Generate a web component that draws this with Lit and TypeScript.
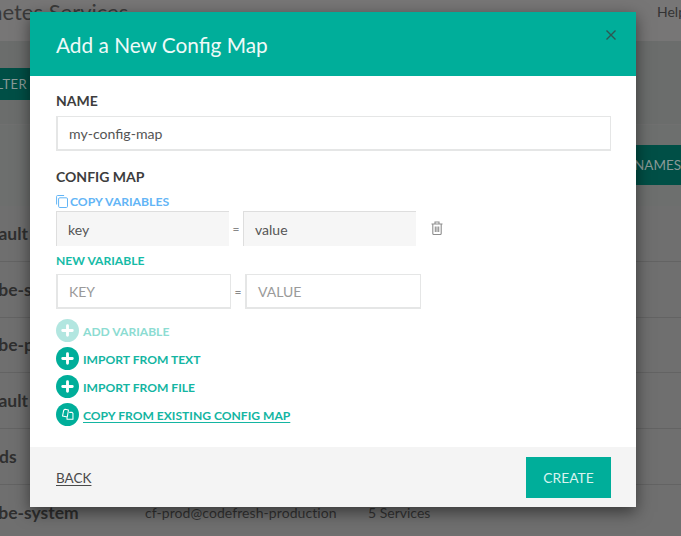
import { LitElement, html, css, svg } from "lit";
import { customElement } from "lit/decorators.js";

const plus = svg`<path d="M12 7v10M7 12h10" fill="none" stroke="currentColor" stroke-width="3" stroke-linecap="round"/>`;

@customElement("app-root")
export class AppRoot extends LitElement {
  static styles = css`
    :host { display: block; position: relative; width: 681px; height: 536px; overflow: hidden; font-family: Lato, "Open Sans", sans-serif; background: #6f6f6f; color: #2e2e2e; }
    * { box-sizing: border-box; }
    .page { height: 536px; display: flex; flex-direction: column; }
    .top { height: 41px; background: #777676; display: flex; justify-content: space-between; flex: none; }
    .page-title { font-size: 22px; line-height: 26px; margin: -1px 0 0 -68px; color: #3a3a3a; white-space: nowrap; }
    .help { font-size: 14px; line-height: 18px; margin: 3px -10px 0 0; color: #333; width: 34px; }
    .band { height: 84px; background: #6b6d6c; flex: none; border-bottom: 1px solid #707070; }
    .filter { width: 60px; height: 32px; margin: 27px 0 0 -30px; background: #004f46; color: #8a9a97; font-size: 13px; line-height: 32px; text-align: right; padding-right: 3px; letter-spacing: .4px; }
    .band2 { height: 81px; flex: none; display: flex; justify-content: flex-end; align-items: flex-start; background: #6d6f6e; }
    .ns { width: 47px; height: 40px; margin-top: 20px; background: #004f46; color: #8a9a97; font-size: 13.5px; line-height: 40px; white-space: nowrap; overflow: hidden; }
    .row { height: 55.8px; flex: none; border-bottom: 1px solid #636363; display: flex; align-items: center; font-size: 17.5px; font-weight: 700; color: #2f2f2f; }
    .row:last-child { border-bottom: 0; }
    .nm { width: 166px; margin-left: -21px; flex: none; white-space: nowrap; }
    .nm.far { width: 172px; margin-left: -27px; }
    .owner { width: 223px; flex: none; font-size: 14px; font-weight: 400; letter-spacing: .07px; color: #333; white-space: nowrap; }
    .svc { font-size: 14px; font-weight: 400; color: #333; white-space: nowrap; }

    .modal { position: absolute; left: 30px; top: 12px; width: 606px; height: 495px; background: #fff; display: flex; flex-direction: column; box-shadow: 0 5px 15px rgba(0,0,0,.5); }
    header { height: 64px; flex: none; background: #00ae9a; display: flex; justify-content: space-between; padding: 0 19px 0 26px; }
    h1 { margin: 0; font-size: 20.8px; font-weight: 400; line-height: 66px; color: #eefaf8; }
    .x { width: 12px; height: 12px; margin-top: 16.5px; color: #2f5652; }
    .body { flex: 1; padding: 16px 26px 0; display: flex; flex-direction: column; align-items: flex-start; }
    label.t { font-size: 14px; font-weight: 700; line-height: 18px; color: #3d3d3d; }
    .name { width: 555px; height: 35px; margin-top: 6px; border: 2px solid #e5e6e6; border-width: 1px 1px 2px 2px; padding-left: 11px; font-size: 14.1px; line-height: 33px; color: #555; }
    .cm { margin-top: 17px; }
    .copy { margin-top: 8px; height: 14px; display: flex; align-items: center; gap: 2px; font-size: 12.2px; font-weight: 700; color: #63b5f6; line-height: 14px; }
    .copy span { margin-top: 1px; }
    .copy svg { width: 12px; height: 13px; flex: none; }
    .pair { display: flex; align-items: center; margin-top: 3px; }
    .f { height: 35px; background: #f6f6f6; border-top: 1px solid #dedede; border-left: 1px solid #dedede; padding-left: 11px; font-size: 14px; line-height: 36px; color: #555; }
    .f.k { width: 173px; }
    .f.v { width: 173px; }
    .eq { width: 14px; text-align: center; font-size: 12px; color: #888; }
    .trash { width: 12px; height: 14px; margin: -1px 0 0 15px; color: #8d8d8d; }
    .nv { margin-top: 8px; font-size: 12.1px; font-weight: 700; line-height: 14px; color: #16bba7; }
    .pair2 { display: flex; align-items: center; margin-top: 6px; }
    .i { height: 35px; background: #fff; border: 2px solid #e5e6e6; border-width: 1px 1px 2px 2px; padding-left: 11px; font-size: 14px; line-height: 34px; color: #9a9a9a; }
    .i.k { width: 175px; }
    .i.v { width: 176px; }
    .eq2 { width: 14px; text-align: center; font-size: 12px; color: #888; }
    .actions { margin-top: 9px; display: flex; flex-direction: column; gap: 4.2px; }
    .a { display: flex; align-items: center; gap: 4px; height: 24px; font-size: 12.1px; font-weight: 700; color: #14b5a2; white-space: nowrap; }
    .a span { margin-top: 2px; }
    .ic { width: 23px; height: 23px; border-radius: 50%; background: #00ae9a; color: #fff; flex: none; display: block; }
    .a.off { color: #8cdcd2; }
    .a.off .ic { background: #b2e6e0; }
    .a.u span { text-decoration: underline; text-underline-offset: 2px; }
    footer { height: 60px; flex: none; background: #f4f4f4; display: flex; justify-content: space-between; align-items: center; padding: 0 25px 0 26px; }
    .back { font-size: 13.5px; color: #4a4a4a; text-decoration: underline; text-underline-offset: 2px; margin-top: 1px; }
    .create { width: 85px; height: 41px; background: #00ae9a; color: #d8f3ef; font-size: 13.8px; line-height: 41px; text-align: center; margin-top: 1px; }
  `;

  render() {
    return html`
      <div class="page">
        <div class="top"><div class="page-title">Kubernetes Services</div><div class="help">Help</div></div>
        <div class="band"><div class="filter">FILTER</div></div>
        <div class="band2"><div class="ns">NAMESPACE</div></div>
        <div class="row"><span class="nm far">default</span></div>
        <div class="row"><span class="nm">kube-system</span></div>
        <div class="row"><span class="nm">kube-public</span></div>
        <div class="row"><span class="nm far">default</span></div>
        <div class="row"><span class="nm">pods</span></div>
        <div class="row"><span class="nm">kube-system</span><span class="owner">cf-prod@codefresh-production</span><span class="svc">5 Services</span></div>
      </div>
      <div class="modal">
        <header>
          <h1>Add a New Config Map</h1>
          <svg class="x" viewBox="0 0 12 12" fill="none" stroke="currentColor" stroke-width="1.4"><path d="M1.5 1.5l9 9M10.5 1.5l-9 9"/></svg>
        </header>
        <div class="body">
          <label class="t">NAME</label>
          <div class="name">my-config-map</div>
          <label class="t cm">CONFIG MAP</label>
          <div class="copy">
            <svg viewBox="0 0 12 13" fill="none" stroke="currentColor" stroke-width="1"><path d="M.6 9.5V1.5a1 1 0 0 1 1-1h6.5"/><rect x="2.6" y="2.8" width="8.9" height="9.7" rx="1.2"/></svg>
            <span>COPY VARIABLES</span>
          </div>
          <div class="pair">
            <div class="f k">key</div><div class="eq">=</div><div class="f v">value</div>
            <svg class="trash" viewBox="0 0 12 14" fill="none" stroke="currentColor" stroke-width="1.1"><path d="M.5 3h11M4 3V1h4v2M1.8 3v9.5a1 1 0 0 0 1 1h6.4a1 1 0 0 0 1-1V3M4.3 5.5v5.5M6 5.5v5.5M7.7 5.5v5.5"/></svg>
          </div>
          <div class="nv">NEW VARIABLE</div>
          <div class="pair2">
            <div class="i k">KEY</div><div class="eq2">=</div><div class="i v">VALUE</div>
          </div>
          <div class="actions">
            <div class="a off"><svg class="ic" viewBox="0 0 24 24">${plus}</svg><span>ADD VARIABLE</span></div>
            <div class="a"><svg class="ic" viewBox="0 0 24 24">${plus}</svg><span>IMPORT FROM TEXT</span></div>
            <div class="a"><svg class="ic" viewBox="0 0 24 24">${plus}</svg><span>IMPORT FROM FILE</span></div>
            <div class="a u"><svg class="ic" viewBox="0 0 24 24" fill="none" stroke="currentColor" stroke-width="1.1" stroke-linejoin="round"><path d="M9.5 6.5l3.5.8-1.2 7.2-5-.9 1.2-6z"/><path d="M13.8 9.8h3l.9 1v6.2h-6.2v-2.2"/></svg><span>COPY FROM EXISTING CONFIG MAP</span></div>
          </div>
        </div>
        <footer>
          <span class="back">BACK</span>
          <div class="create">CREATE</div>
        </footer>
      </div>
    `;
  }
}
